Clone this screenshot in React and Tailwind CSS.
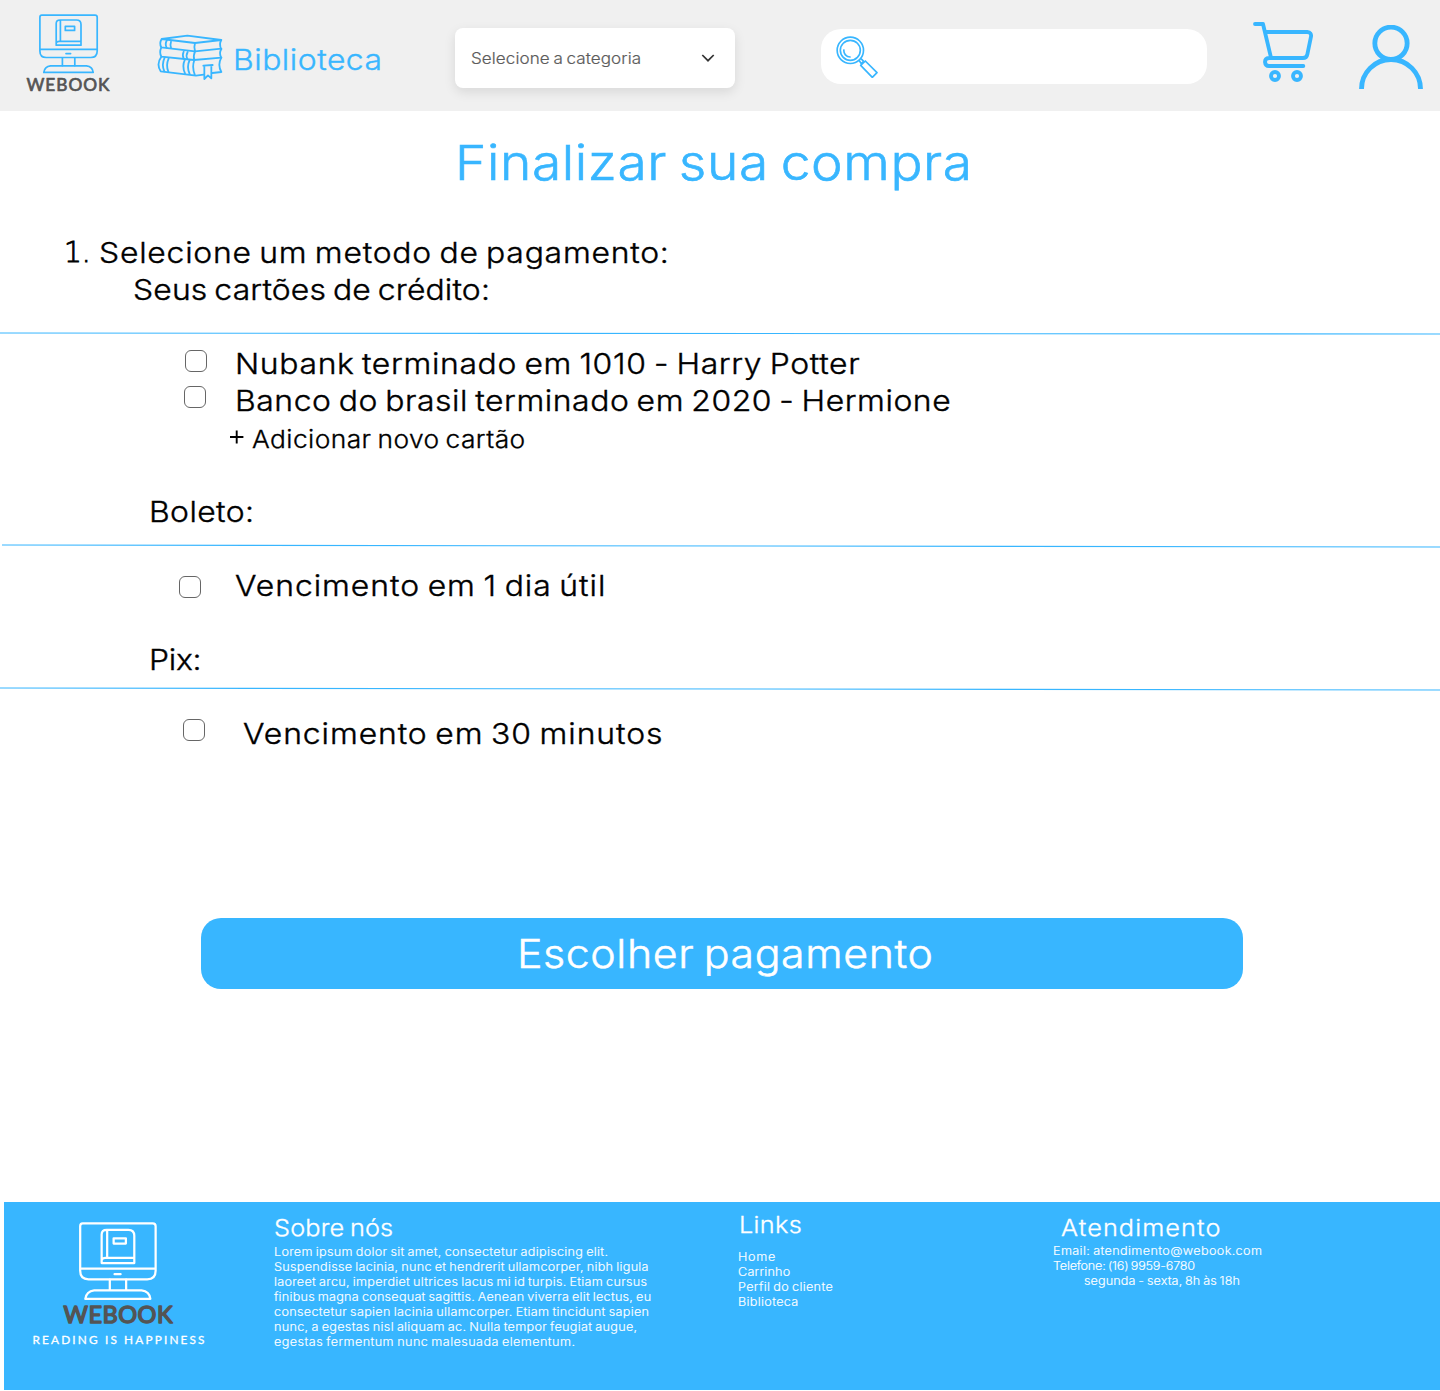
import React from "react";

const BLUE = "#38b6ff";

/* Slightly widened text used everywhere on the page. */
function Txt({ as: Tag = "span", className = "", children }) {
  return (
    <Tag className={`block w-max origin-left scale-x-[1.1] whitespace-pre font-light [-webkit-text-stroke:0.013em_currentColor] [word-spacing:-0.07em] ${className}`}>
      {children}
    </Tag>
  );
}

function Monitor({ color, className }) {
  return (
    <svg viewBox="0 0 60 60" className={className} fill="none" stroke={color} strokeWidth="1.7" strokeLinejoin="round" strokeLinecap="round">
      <path d="M2.8 1.1H56Q58.2 1.1 58.2 3.3V37Q58.2 43.5 51.8 43.5H7.2Q.9 43.5 .9 37V3.3Q.9 1.1 2.8 1.1ZM.9 35.4H58.2" />
      <path d="M17.2 31.2V9.5Q17.2 6 21 6H37.5Q42 6 42 10.5V31.2H17.2V29Q17.8 27.3 20.2 27.3H42M21.4 6.5V27" />
      <path d="M26.3 12.4H35.6V16.4H26.3ZM27 39.6H31.6M23.4 43.8V51.6M35.8 43.8V51.6" />
      <path d="M11.5 51.9H47.5Q53.6 52.6 54.2 58.4H4.8Q5.6 52.6 11.5 51.9Z" />
    </svg>
  );
}

function HeaderLogo() {
  return (
    <div className="flex w-[86px] flex-col items-center">
      <Monitor color={BLUE} className="h-[60px] w-[60px]" />
      <svg viewBox="0 0 86 26" className="-mt-px h-[26px] w-[86px] overflow-visible">
        <text x="0.5" y="18" textLength="83" fontFamily="Lato, sans-serif" fontSize="17.3" fill="#545454" stroke="#545454" strokeWidth="0.7" strokeLinejoin="round">WEBOOK</text>
      </svg>
    </div>
  );
}

function FooterLogo() {
  return (
    <div className="flex w-[174px] flex-col items-center">
      <Monitor color="#fff" className="h-[79px] w-[79px]" />
      <svg viewBox="0 0 174 50" className="h-[50px] w-[174px] overflow-visible">
        <text x="31.5" y="22" textLength="109" fontFamily="Lato, sans-serif" fontSize="23.5" fill="#545454" stroke="#545454" strokeWidth="1.5" strokeLinejoin="round">WEBOOK</text>
        <text x="0.5" y="42.5" textLength="172" fontFamily="Lato, sans-serif" fontSize="11.8" fill="#fff" stroke="#fff" strokeWidth="0.3" strokeLinejoin="round">READING IS HAPPINESS</text>
      </svg>
    </div>
  );
}

function Books() {
  return (
    <svg viewBox="471 102 198 141" className="h-[47px] w-[66px]" fill="none" stroke={BLUE} strokeWidth="5.4" strokeLinejoin="round" strokeLinecap="round">
      <path d="M485 117L562 107L664 120L585 129ZM485 117Q477 130 484 142L585 154L664 146M664 120Q656 133 664 147" />
      <path d="M585 129Q581 142 585 154M501 120Q494 132 500 143M513 125Q510 134 513 143" />
      <path d="M484 142Q477 157 484 170L582 180L664 173M664 147Q656 160 664 173M585 154Q579 168 583 180" />
      <path d="M551 155Q546 165 551 176M563 156Q557 166 562 177" />
      <path d="M484 170Q468 192 482 214L588 227L611 224M637 219L664 216M664 173Q652 194 664 216M583 180Q575 203 585 226" />
      <path d="M494 173Q484 194 493 214M506 175Q497 196 505 215M555 178Q545 199 555 220M569 180Q559 201 569 222" />
      <path d="M610 197L638 195M613 198V237L624 226L634 235V197" />
    </svg>
  );
}

function SearchIcon() {
  return (
    <svg viewBox="78 63 126 126" className="h-[42px] w-[42px]" fill="none" stroke={BLUE} strokeWidth="5" strokeLinejoin="round">
      <circle cx="121" cy="106" r="39.5" />
      <circle cx="121" cy="106" r="30" />
      <path d="M102 103A19 19 0 0 0 122 126M147 136L154 146M153 131L161 139M152 151L166 138L201 173L187 187ZM154 146L161 139" />
    </svg>
  );
}

function CartIcon() {
  return (
    <svg viewBox="189 66 180 180" className="h-[60px] w-[60px]" fill="none" stroke={BLUE} strokeWidth="11.5" strokeLinejoin="round" strokeLinecap="round">
      <path d="M195 72H219L243 173M229 96H352Q365 97 363 110L352 163Q350 174 339 174H237Q225 175 225 186Q226 198 237 198H340" />
      <circle cx="255" cy="228" r="12" />
      <circle cx="321" cy="228" r="12" />
    </svg>
  );
}

function UserIcon() {
  return (
    <svg viewBox="507 75 192 192" className="h-16 w-16" fill="none" stroke={BLUE} strokeWidth="14.5">
      <circle cx="603" cy="130" r="48.5" />
      <path d="M514.5 267A88.5 88.5 0 0 1 691.5 267" />
    </svg>
  );
}

function Divider({ drop = 2, className = "" }) {
  return (
    <svg viewBox="0 0 1440 4" className={`block h-1 w-full ${className}`}>
      <line x1="0" y1="1" x2="1440" y2={1 + drop} stroke={BLUE} strokeWidth="1.1" />
    </svg>
  );
}

function Box({ className }) {
  return (
    <button type="button" role="checkbox" aria-checked="false" className={`size-[22px] shrink-0 rounded-md border border-[#666] bg-white ${className}`} />
  );
}

export default function App() {
  return (
    <div className="flex h-[1391px] w-[1440px] flex-col overflow-hidden bg-white font-['Inter',sans-serif] text-black">
      <header className="flex h-[111px] shrink-0 items-start bg-[#f0f0f0]">
        <div className="ml-[26px] mt-[14px]"><HeaderLogo /></div>
        <a className="ml-[45px] mt-[34px] flex">
          <Books />
          <Txt className="ml-[10px] mt-[7px] text-[29px] leading-[37px] tracking-[0.45px] text-[#38b6ff]">Biblioteca</Txt>
        </a>
        <div className="ml-auto mt-7 flex h-[60px] w-[280px] items-center justify-between rounded-lg bg-white pl-4 pr-5 shadow-[0_4px_12px_rgba(0,0,0,0.1)]">
          <Txt className="mt-px text-[15.5px] leading-6 tracking-[0.07px] text-[#5c5c5c]">Selecione a categoria</Txt>
          <svg viewBox="0 0 14 8" className="h-2 w-[14px]" fill="none" stroke="#333" strokeWidth="1.7">
            <path d="M1.3 1L7 6.7L12.7 1" />
          </svg>
        </div>
        <div className="ml-[86px] mt-[29px] flex h-[55px] w-[386px] rounded-[20px] bg-white pl-[15px] pt-[7px]">
          <SearchIcon />
        </div>
        <div className="ml-[46px] mt-[22px]"><CartIcon /></div>
        <div className="ml-[46px] mr-[17px] mt-[25px]"><UserIcon /></div>
      </header>

      <main className="flex flex-col">
        <Txt as="h1" className="ml-[454.5px] mt-[21px] text-[48.5px] leading-[61px] tracking-[0.52px] text-[#38b6ff]">Finalizar sua compra</Txt>

        <div className="mt-[41px] flex flex-col text-[29px] leading-[37px]">
          <div className="flex h-[37px] pl-[64px]">
            <span className="w-[35px] font-['DejaVu_Sans',sans-serif] text-[28px] font-extralight [-webkit-text-stroke:0.9px_#000]">1.</span>
            <Txt className="tracking-[0.68px]">Selecione um metodo de pagamento:</Txt>
          </div>
          <Txt className="ml-[133px] tracking-[0.13px]">Seus cartões de crédito:</Txt>
          <div className="h-[37px] pt-6"><Divider drop={1} /></div>

          <div className="flex h-[37px] pl-[185px]">
            <Box className="mt-[5px]" />
            <Txt className="ml-[28px] tracking-[0.59px]">Nubank terminado em 1010 - Harry Potter</Txt>
          </div>
          <div className="flex h-[37px] pl-[184px]">
            <Box className="mt-1" />
            <Txt className="ml-[29px] tracking-[0.49px]">Banco do brasil terminado em 2020 - Hermione</Txt>
          </div>
          <div className="flex h-[37px] items-start pl-[230px]">
            <svg viewBox="0 0 14 14" className="mt-[11px] h-[14px] w-[14px]" stroke="#000" strokeWidth="1.9">
              <path d="M0 7H13.4M6.7 .5V13.5" />
            </svg>
            <Txt className="ml-[8px] mt-[5px] text-[24px] leading-[31px] tracking-[0.37px]">Adicionar novo cartão</Txt>
          </div>

          <Txt className="ml-[149px] mt-[37px] tracking-[0.35px]">Boleto:</Txt>
          <div className="h-[37px] pl-[2px] pt-[14px]"><Divider /></div>
          <div className="flex h-[37px] pl-[179px]">
            <Box className="mt-[9px]" />
            <Txt className="ml-[34px] tracking-[0.85px]">Vencimento em 1 dia útil</Txt>
          </div>

          <Txt className="ml-[149px] mt-[37px] tracking-[-0.25px]">Pix:</Txt>
          <div className="h-[37px] pt-[9px]"><Divider /></div>
          <div className="flex h-[37px] pl-[183px]">
            <Box className="mt-1" />
            <Txt className="ml-[38px] tracking-[0.82px]">Vencimento em 30 minutos</Txt>
          </div>
        </div>

        <button type="button" className="ml-[201px] mt-[166px] h-[71px] w-[1042px] rounded-[20px] bg-[#38b6ff] pl-[315.5px] text-white">
          <Txt className="text-[39px] leading-[69px] tracking-[0.51px]">Escolher pagamento</Txt>
        </button>
      </main>

      <footer className="mb-px ml-1 mt-auto flex h-[188px] shrink-0 items-start bg-[#38b6ff] text-[11.5px] leading-[15px] text-white">
        <div className="ml-[27.5px] mt-[19.5px]"><FooterLogo /></div>
        <section className="ml-[68.5px] mt-3 w-[464px]">
          <Txt as="h2" className="text-[23px] leading-[29px] tracking-[0.15px]">Sobre nós</Txt>
          <div className="mt-[2px]">
            <Txt className="tracking-[0.27px]">Lorem ipsum dolor sit amet, consectetur adipiscing elit.</Txt>
            <Txt className="tracking-[0.25px]">Suspendisse lacinia, nunc et hendrerit ullamcorper, nibh ligula</Txt>
            <Txt className="tracking-[0.25px]">laoreet arcu, imperdiet ultrices lacus mi id turpis. Etiam cursus</Txt>
            <Txt className="tracking-[0.21px]">finibus magna consequat sagittis. Aenean viverra elit lectus, eu</Txt>
            <Txt className="tracking-[0.28px]">consectetur sapien lacinia ullamcorper. Etiam tincidunt sapien</Txt>
            <Txt className="tracking-[0.27px]">nunc, a egestas nisl aliquam ac. Nulla tempor feugiat augue,</Txt>
            <Txt className="tracking-[0.38px]">egestas fermentum nunc malesuada elementum.</Txt>
          </div>
        </section>
        <section className="mt-[9px] w-[315px]">
          <Txt as="h2" className="ml-px text-[23px] leading-[29px] tracking-[0.3px]">Links</Txt>
          <div className="mt-[10px]">
            <Txt className="tracking-[0.6px]">Home</Txt>
            <Txt className="tracking-[0.18px]">Carrinho</Txt>
            <Txt className="tracking-[0.3px]">Perfil do cliente</Txt>
            <Txt className="tracking-[0.3px]">Biblioteca</Txt>
          </div>
        </section>
        <section className="mt-3">
          <Txt as="h2" className="ml-2 text-[23px] leading-[29px] tracking-[0.98px]">Atendimento</Txt>
          <div className="mt-px">
            <Txt className="tracking-[0.33px]">Email: atendimento@webook.com</Txt>
            <Txt className="tracking-[-0.21px]">Telefone: (16) 9959-6780</Txt>
            <Txt className="ml-[31px] tracking-[0.08px]">segunda - sexta, 8h às 18h</Txt>
          </div>
        </section>
      </footer>
    </div>
  );
}
